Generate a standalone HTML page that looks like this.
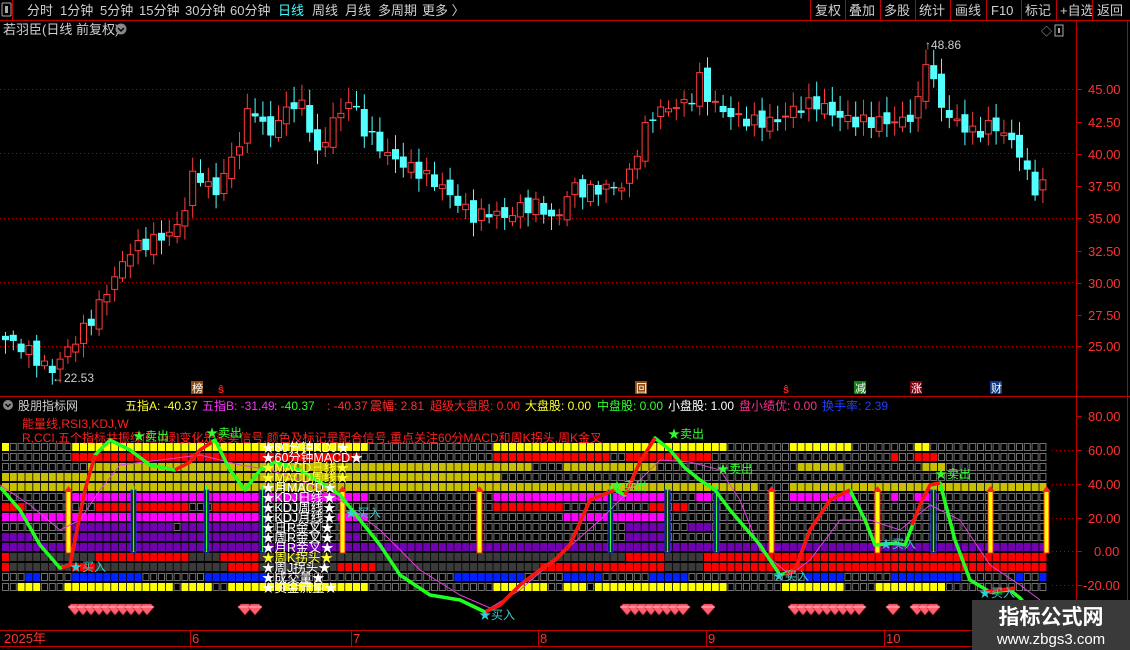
<!DOCTYPE html>
<html><head><meta charset="utf-8">
<style>
html,body{margin:0;padding:0;background:#000;width:1130px;height:650px;overflow:hidden}
svg{display:block}
text{font-family:"Liberation Sans","Noto Sans CJK SC",sans-serif}
</style></head>
<body>
<svg id="s" width="1130" height="650" xmlns="http://www.w3.org/2000/svg">
<rect width="1130" height="650" fill="#000"/>
<line x1="0" y1="20.5" x2="1130" y2="20.5" stroke="#c00000"/>
<rect x="2" y="3" width="9" height="13" fill="none" stroke="#aaa" rx="1"/>
<rect x="5" y="6" width="3" height="7" fill="#aaa"/>
<line x1="12.5" y1="0" x2="12.5" y2="20" stroke="#c00000"/>
<g font-size="13" fill="#d0d0d0">
<text x="27" y="15">分时</text><text x="60" y="15">1分钟</text><text x="100" y="15">5分钟</text><text x="139" y="15">15分钟</text><text x="185" y="15">30分钟</text><text x="230" y="15">60分钟</text>
<text x="278" y="15" fill="#40ffff">日线</text><text x="312" y="15">周线</text><text x="345" y="15">月线</text><text x="378" y="15">多周期</text><text x="422" y="15">更多 〉</text>
<text x="815" y="15">复权</text><text x="849" y="15">叠加</text><text x="884" y="15">多股</text><text x="919" y="15">统计</text><text x="955" y="15">画线</text><text x="991" y="15">F10</text><text x="1025" y="15">标记</text><text x="1060" y="15">+自选</text><text x="1097" y="15">返回</text>
</g>
<g stroke="#c00000"><line x1="810.5" y1="0" x2="810.5" y2="20"/><line x1="845.5" y1="0" x2="845.5" y2="20"/><line x1="880.5" y1="0" x2="880.5" y2="20"/><line x1="915.5" y1="0" x2="915.5" y2="20"/><line x1="950.5" y1="0" x2="950.5" y2="20"/><line x1="986.5" y1="0" x2="986.5" y2="20"/><line x1="1021.5" y1="0" x2="1021.5" y2="20"/><line x1="1056.5" y1="0" x2="1056.5" y2="20"/><line x1="1092.5" y1="0" x2="1092.5" y2="20"/></g>
<text x="3" y="34" font-size="13" fill="#d0d0d0">若羽臣(日线 前复权)</text>
<circle cx="121" cy="29" r="5.5" fill="#888"/><path d="M118 28l3 3 3-3" stroke="#000" stroke-width="1.5" fill="none"/>
<text x="1041" y="35" font-size="11" fill="#aaa">◇</text>
<rect x="1055" y="25" width="8" height="11" fill="none" stroke="#aaa"/><rect x="1058" y="28" width="2" height="5" fill="#aaa"/>
<line x1="1076.5" y1="20" x2="1076.5" y2="650" stroke="#c00000"/>
<line x1="0" y1="396.5" x2="1130" y2="396.5" stroke="#c00000"/>
<line x1="1127.5" y1="20" x2="1127.5" y2="650" stroke="#c00000"/>
<g font-size="13" fill="#ff3232">
<text x="1088" y="94">45.00</text><text x="1088" y="127">42.50</text><text x="1088" y="159">40.00</text><text x="1088" y="191">37.50</text><text x="1088" y="223">35.00</text><text x="1088" y="256">32.50</text><text x="1088" y="288">30.00</text><text x="1088" y="320">27.50</text><text x="1088" y="351">25.00</text>
<text x="1088" y="421">80.00</text><text x="1088" y="455">60.00</text><text x="1088" y="489">40.00</text><text x="1088" y="523">20.00</text><text x="1094" y="556">0.00</text><text x="1083" y="590">-20.00</text>
</g>
<g stroke="#c00000"><line x1="1076" y1="89.5" x2="1082" y2="89.5"/><line x1="1076" y1="122.5" x2="1082" y2="122.5"/><line x1="1076" y1="154.5" x2="1082" y2="154.5"/><line x1="1076" y1="186.5" x2="1082" y2="186.5"/><line x1="1076" y1="218.5" x2="1082" y2="218.5"/><line x1="1076" y1="251.5" x2="1082" y2="251.5"/><line x1="1076" y1="283.5" x2="1082" y2="283.5"/><line x1="1076" y1="315.5" x2="1082" y2="315.5"/><line x1="1076" y1="346.5" x2="1082" y2="346.5"/>
<line x1="1076" y1="416.5" x2="1082" y2="416.5"/><line x1="1076" y1="450.5" x2="1082" y2="450.5"/><line x1="1076" y1="484.5" x2="1082" y2="484.5"/><line x1="1076" y1="518.5" x2="1082" y2="518.5"/><line x1="1076" y1="551.5" x2="1082" y2="551.5"/><line x1="1076" y1="585.5" x2="1082" y2="585.5"/></g>
<g stroke="#c00000" stroke-dasharray="1,3"><line x1="0" y1="89.5" x2="1076" y2="89.5"/><line x1="0" y1="153.5" x2="1076" y2="153.5"/><line x1="0" y1="218.5" x2="1076" y2="218.5"/><line x1="0" y1="282.5" x2="1076" y2="282.5"/><line x1="0" y1="346.5" x2="1076" y2="346.5"/>
<line x1="1052" y1="450.5" x2="1076" y2="450.5"/><line x1="1052" y1="484.5" x2="1076" y2="484.5"/><line x1="1052" y1="518.5" x2="1076" y2="518.5"/><line x1="1052" y1="551.5" x2="1076" y2="551.5"/><line x1="1052" y1="585.5" x2="1076" y2="585.5"/></g>
<g id="candles"></g>
<text x="52" y="382" font-size="12" fill="#ccc">←22.53</text>
<text x="925" y="49" font-size="12" fill="#ccc">↑48.86</text>
<rect x="191" y="381" width="12" height="13" fill="#8b4a10"/><text x="192" y="392" font-size="11" fill="#fff">榜</text>
<text x="218" y="393" font-size="11" fill="#ff2020" font-weight="bold">ŝ</text>
<rect x="635" y="381" width="12" height="13" fill="#8b4a10"/><text x="636" y="392" font-size="11" fill="#fff">回</text>
<text x="783" y="393" font-size="11" fill="#ff2020" font-weight="bold">ŝ</text>
<rect x="854" y="381" width="12" height="13" fill="#108010"/><text x="855" y="392" font-size="11" fill="#fff">减</text>
<rect x="910" y="381" width="12" height="13" fill="#800010"/><text x="911" y="392" font-size="11" fill="#fff">涨</text>
<rect x="990" y="381" width="12" height="13" fill="#103a80"/><text x="991" y="392" font-size="11" fill="#fff">财</text>
<circle cx="8" cy="405" r="5" fill="#888"/><path d="M5.5 404l2.5 2.5 2.5-2.5" stroke="#000" stroke-width="1.4" fill="none"/>
<text x="18" y="410" font-size="12" fill="#d0d0d0">股朋指标网</text>
<g font-size="12">
<text x="125" y="410" fill="#ffff30">五指A: -40.37</text>
<text x="202" y="410" fill="#ff30ff">五指B: -31.49</text>
<text x="274" y="410" fill="#30ff30">: -40.37</text>
<text x="327" y="410" fill="#ff3030">: -40.37</text>
<text x="370" y="410" fill="#ff3030">震幅: 2.81</text>
<text x="430" y="410" fill="#ff2020">超级大盘股: 0.00</text>
<text x="525" y="410" fill="#ffff30">大盘股: 0.00</text>
<text x="597" y="410" fill="#30ff30">中盘股: 0.00</text>
<text x="668" y="410" fill="#ffffff">小盘股: 1.00</text>
<text x="739" y="410" fill="#ff3090">盘小绩优: 0.00</text>
<text x="822" y="410" fill="#2040ff">换手率: 2.39</text>
<text x="22" y="428" fill="#ff2020">能量线,RSI3,KDJ,W</text>
<text x="22" y="442" fill="#ff2020">R,CCI,五个指标共振绿[红][绿]变化是买卖信号,颜色及标记是配合信号,重点关注60分MACD和周K拐头,周K金叉</text>
</g>
<g id="grid"></g>
<g id="bars"></g>
<g id="lines"></g>
<g font-size="12.5" fill="#fff">
<text x="262" y="452">★60分钟KDJ★</text>
<text x="262" y="462">★60分钟MACD★</text>
<text x="262" y="472" fill="#ffff30">★MACD日线★</text>
<text x="262" y="482" fill="#ffff30">★MACD周线★</text>
<text x="262" y="492">★月MACD★</text>
<text x="262" y="502">★KDJ日线★</text>
<text x="262" y="512">★KDJ周线★</text>
<text x="262" y="522">★KDJ月线★</text>
<text x="262" y="532">★日R金叉★</text>
<text x="262" y="542">★周R金叉★</text>
<text x="262" y="552">★月R金叉★</text>
<text x="262" y="562" fill="#ffff30">★周K拐头★</text>
<text x="262" y="572">★周J拐头★</text>
<text x="262" y="582">★成交量★</text>
<text x="262" y="592">★资金流量★</text>
</g>
<g font-size="12" fill="#30ff30">
<text x="133" y="440">★卖出</text><text x="206" y="437">★卖出</text><text x="668" y="438">★卖出</text><text x="717" y="473">★卖出</text><text x="935" y="478">★卖出</text><text x="611" y="490">★卖出</text>
</g>
<g font-size="12" fill="#30d0d0">
<text x="70" y="571">★买入</text><text x="479" y="619">★买入</text><text x="773" y="580">★买入</text><text x="880" y="548">★买入</text><text x="979" y="597">★买入</text><text x="345" y="517">★买入</text>
</g>
<g id="gems"></g>
<line x1="0" y1="630.5" x2="1076" y2="630.5" stroke="#c00000"/>
<line x1="0" y1="646.5" x2="1076" y2="646.5" stroke="#c00000"/>
<g stroke="#c00000"><line x1="190.5" y1="630" x2="190.5" y2="646"/><line x1="351.5" y1="630" x2="351.5" y2="646"/><line x1="538.5" y1="630" x2="538.5" y2="646"/><line x1="706.5" y1="630" x2="706.5" y2="646"/><line x1="884.5" y1="630" x2="884.5" y2="646"/></g>
<g font-size="13" fill="#ff3030"><text x="4" y="643">2025年</text><text x="192" y="643">6</text><text x="353" y="643">7</text><text x="540" y="643">8</text><text x="708" y="643">9</text><text x="886" y="643">10</text></g>
<rect x="972" y="600" width="158" height="50" fill="#3a3a3a"/>
<text x="1051" y="624" font-size="21" fill="#fff" font-weight="bold" text-anchor="middle">指标公式网</text>
<text x="1051" y="644" font-size="15" fill="#fff" text-anchor="middle">www.zbgs3.com</text>
</svg>
<script>
var NS="http://www.w3.org/2000/svg";
function el(p,t,a){var e=document.createElementNS(NS,t);for(var k in a)e.setAttribute(k,a[k]);p.appendChild(e);return e;}
var kp=[[5,25.5],[25,24.8],[50,23],[70,25],[90,27],[108,29.5],[130,32.5],[160,33.5],[175,34],[185,36],[195,39],[205,37.5],[215,37],[240,41],[250,44],[258,43],[265,41.5],[275,42],[285,43.5],[300,44],[310,42],[318,39.5],[330,42.5],[340,43],[350,44.5],[362,42],[375,41],[385,40],[400,39.3],[420,38.5],[440,37.5],[460,36],[475,35],[490,35.5],[505,35],[520,35.8],[540,36],[555,34.5],[570,37.5],[585,37],[600,37.3],[625,37.5],[640,41],[650,43],[665,43.5],[690,44],[698,46],[710,44],[730,43],[750,42.5],[775,42.5],[795,43.5],[815,44],[835,43],[855,42.5],[875,42.5],[900,42.5],[912,43],[918,44],[925,47.5],[935,45],[945,43],[960,42.3],[975,41.5],[990,42.3],[1005,41.5],[1020,40],[1028,38],[1037,37],[1047,38]];
function interp(x){for(var i=1;i<kp.length;i++){if(x<=kp[i][0]){var a=kp[i-1],b=kp[i];return a[1]+(b[1]-a[1])*(x-a[0])/(b[0]-a[0]);}}return kp[kp.length-1][1];}
function Y(p){return 89.3+(45-p)*12.84;}
var cg=document.getElementById("candles");
var prev=25.8;
for(var i=0;i<134;i++){var x=5+i*7.8;var c=interp(x)+Math.sin(i*2.7)*0.5;var o=prev+Math.sin(i*1.9)*0.4;
var hi=Math.max(o,c)+0.3+Math.abs(Math.sin(i*3.1))*0.9;var lo=Math.min(o,c)-0.3-Math.abs(Math.cos(i*2.2))*0.8;
var up=c>=o;var col=up?"#ff3c3c":"#54ffff";
el(cg,"line",{x1:x+0.5,x2:x+0.5,y1:Y(hi),y2:Y(lo),stroke:col});
var t=Y(Math.max(o,c)),b=Y(Math.min(o,c));if(b-t<1)b=t+1;
if(up)el(cg,"rect",{x:x-2.5,y:t,width:6,height:b-t,fill:"#000",stroke:col});
else el(cg,"rect",{x:x-3,y:t,width:7,height:b-t+0.5,fill:col});
prev=c;}
var rows=[
{c:"#ffff00",r:[["L",0,22],["L",200,1030],["L",1370,1568],["R",0,450],["R",630,790],["R",970,1010]]},
{c:"#ff0000",r:[["L",200,1000],["L",1370,1568],["R",0,135],["R",160,405],["R",900,930],["R",970,1030]]},
{c:"#c8c000",r:[["L",245,1470],["R",0,250],["R",640,765],["R",990,1050]]},
{c:"#c8c000",r:[["L",0,1390]]},
{c:"#c8c000",r:[["L",0,1568],["R",0,545],["R",630,1145],["R",1150,1345]]},
{c:"#ff00ff",r:[["L",200,1030],["L",1370,1568],["R",0,270],["R",360,405],["R",630,790],["R",900,925],["R",970,1030]]},
{c:"#ff0000",r:[["L",0,60],["L",270,520],["L",580,720],["L",1370,1568],["R",225,270],["R",295,340]]},
{c:"#ff00ff",r:[["L",0,720],["L",940,1030],["R",0,270]]},
{c:"#7000b0",r:[["L",210,470],["L",500,720],["L",960,1000],["R",160,270],["R",340,405]]},
{c:"#7000b0",r:[["L",0,90],["L",200,720],["L",960,1000],["R",160,270]]},
{c:"#7000b0",r:[["L",0,1568],["R",0,1345]]},
{c:"#ff0000",d:1,r:[["L",0,20],["L",270,515],["L",610,720],["R",160,270],["R",385,1345]]},
{c:"#ff0000",d:1,r:[["L",0,20],["L",200,270],["L",630,720],["L",945,1050],["L",1500,1568],["R",0,270],["R",385,1345]]},
{c:"#0020ff",r:[["L",70,110],["L",200,400],["L",565,745],["L",1255,1450],["R",0,110],["R",225,335],["R",670,765],["R",900,1100],["R",1255,1280],["R",1325,1345]]},
{c:"#ffff00",r:[["L",45,110],["L",180,470],["L",495,585],["L",630,1030],["L",1370,1525],["R",0,65],["R",90,335],["R",340,450],["R",610,765],["R",855,875],["R",878,1055]]}];
function cx(s,v){return s=="L"?v/2.775:565+v/2.775;}
var gg=document.getElementById("grid");var P=7.8,N=134;
for(var r=0;r<rows.length;r++){var y=443+r*10;var R=rows[r];
for(var k=0;k<N;k++){var x=2+k*P;var mid=x+3.5;var f=null;
for(var j=0;j<R.r.length;j++){var q=R.r[j];if(mid>=cx(q[0],q[1])&&mid<=cx(q[0],q[2])){f=R.c;break;}}
if(f)el(gg,"rect",{x:x,y:y,width:7,height:8,fill:f});
else if(R.d)el(gg,"rect",{x:x,y:y,width:7,height:8,fill:"#3a3a3a"});
else el(gg,"rect",{x:x+0.5,y:y+0.5,width:6,height:7,fill:"none",stroke:"#707070"});}}
var bg=document.getElementById("bars");
[68,342,479,771,877,990,1046].forEach(function(x){el(bg,"rect",{x:x-2,y:490,width:5,height:63,fill:"#ffff00",stroke:"#ff2020"});el(bg,"polygon",{points:(x-4)+",492 "+(x+5)+",492 "+(x+0.5)+",486",fill:"#ff2020"});});
[133,206,262,610,667,716,933].forEach(function(x){el(bg,"rect",{x:x-2,y:490,width:5,height:62,fill:"#000",stroke:"#2040ff"});el(bg,"line",{x1:x+0.5,x2:x+0.5,y1:486,y2:552,stroke:"#30ff30","stroke-width":1.5});});
var lg=document.getElementById("lines");
var mag=[[0,485],[30,505],[60,530],[80,520],[100,490],[120,465],[160,460],[200,455],[240,465],[270,470],[300,480],[340,500],[380,530],[420,570],[460,595],[490,608],[520,590],[560,555],[600,520],[640,480],[660,460],[690,462],[720,470],[740,500],[760,550],[790,575],[810,560],[840,520],[870,520],[900,530],[930,505],[960,520],[990,565],[1020,585],[1040,600]];
el(lg,"polyline",{points:mag.join(" "),fill:"none",stroke:"#e040e0","stroke-width":1});
var gr=[[0,487],[20,510],[40,545],[60,568],[70,565],[85,490],[95,455],[110,440],[130,450],[150,465],[175,470],[190,462],[200,450],[215,440],[230,470],[245,490],[260,470],[275,462],[300,470],[320,482],[340,495],[360,520],[380,545],[400,575],[430,595],[460,600],[485,612],[500,605],[520,585],[540,570],[555,560],[570,545],[590,500],[615,490],[625,495],[640,462],[655,438],[670,450],[685,468],[700,480],[715,490],[730,510],[760,545],[780,575],[795,570],[810,530],[830,500],[850,490],[865,520],[875,545],[895,543],[905,545],[920,505],[930,485],[940,483],[955,540],[970,580],[990,592],[1010,590],[1020,598],[1030,610]];
el(lg,"polyline",{points:gr.join(" "),fill:"none",stroke:"#20ff20","stroke-width":3.5,"stroke-linejoin":"round"});
var reds=[[[62,568],[70,565],[85,490],[95,455]],[[175,470],[190,462],[200,450],[212,442]],[[485,612],[500,605],[520,585],[540,570],[555,560],[570,545],[590,500],[615,490]],[[625,495],[640,462],[655,438]],[[785,575],[795,570],[810,530],[830,500],[850,490]],[[912,525],[920,505],[930,485],[940,483]],[[985,592],[1015,588]]];
reds.forEach(function(s){el(lg,"polyline",{points:s.join(" "),fill:"none",stroke:"#ff1010","stroke-width":3.5,"stroke-linejoin":"round"});});
var gm=document.getElementById("gems");
function gem(x){el(gm,"polygon",{points:(x-7)+",607 "+(x-4)+",604 "+(x+4)+",604 "+(x+7)+",607 "+x+",615",fill:"#ff6070",stroke:"#b02030","stroke-width":0.6});el(gm,"line",{x1:x-7,y1:607,x2:x+7,y2:607,stroke:"#ffd0d0","stroke-width":0.8});}
[75,83,91,99,107,115,123,131,139,147,245,255,627,635,643,651,659,667,675,683,708,795,803,811,819,827,835,843,851,859,893,917,925,933].forEach(gem);
</script>
</body></html>
